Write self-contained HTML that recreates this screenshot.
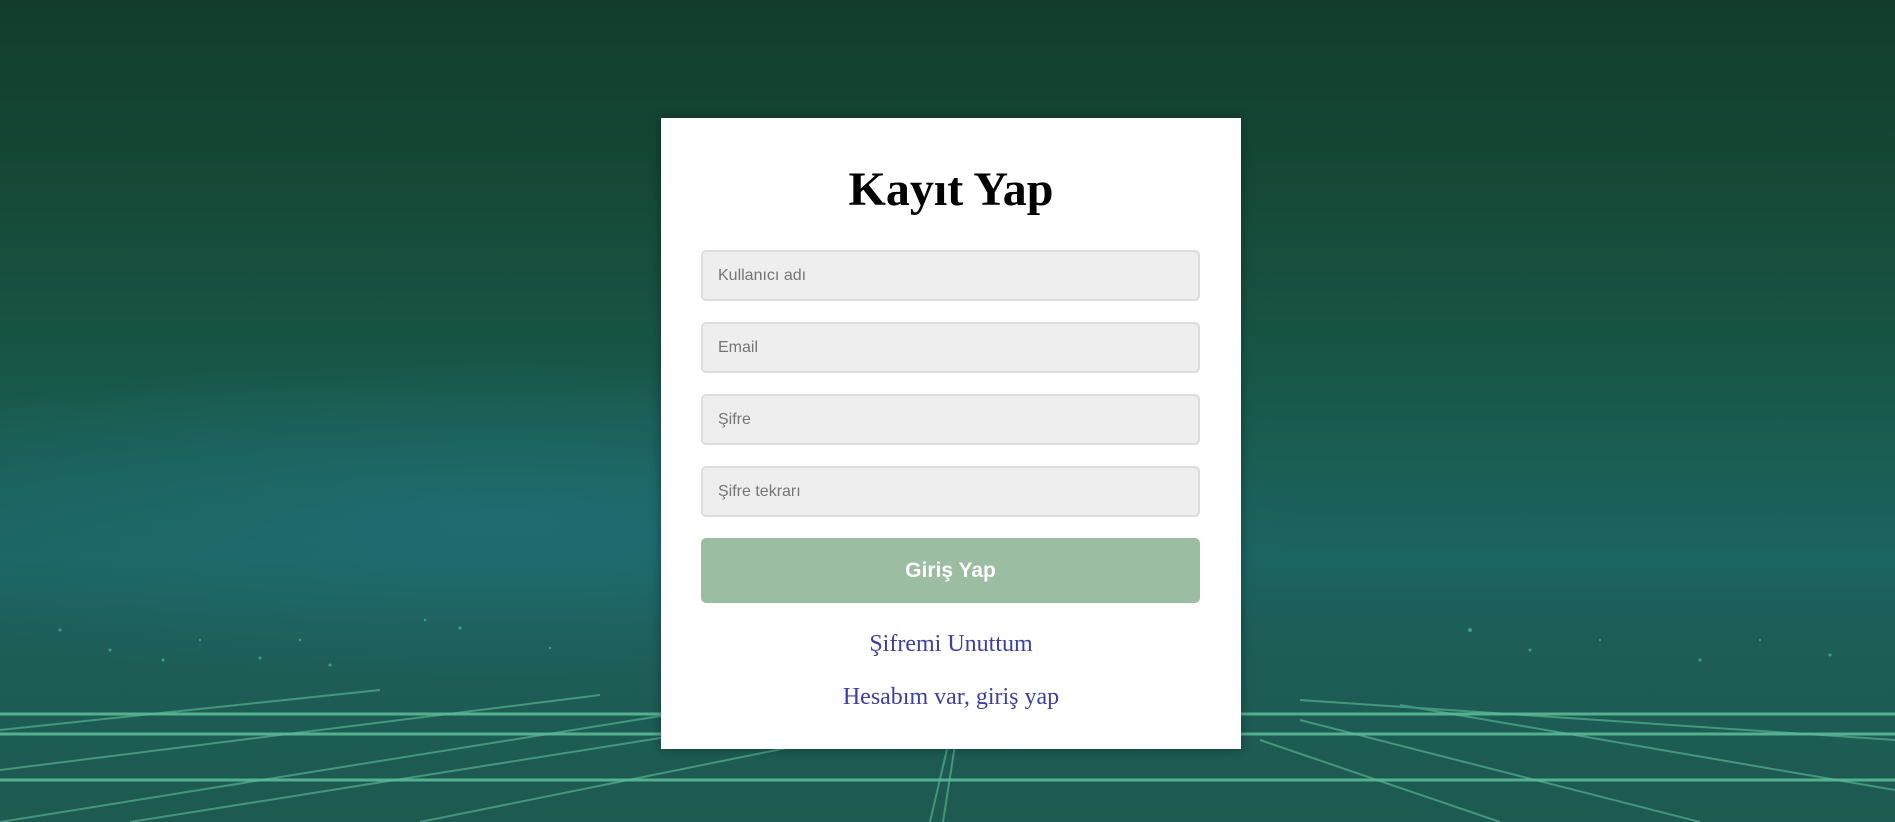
<!DOCTYPE html>
<html><head><meta charset="utf-8"><style>
html,body{margin:0;width:1895px;height:822px;overflow:hidden}
body{position:relative;font-family:"Liberation Sans",sans-serif;
background:
radial-gradient(ellipse 800px 160px at 500px 520px, rgba(32,110,118,0.8), rgba(32,110,118,0) 100%),
linear-gradient(180deg,#123d2c 0%,#164a38 25%,#195a4c 50%,#1c6462 68%,#1d5e58 76%,#1d5a50 100%);}
.bg{position:absolute;left:0;top:0}
.card{position:absolute;left:661px;top:118px;width:580px;height:631px;background:#fff;box-shadow:0 0 10px rgba(0,0,0,.35);box-sizing:border-box}
h1{margin:0;position:absolute;left:0;width:100%;text-align:center;font:bold 48px "Liberation Serif",serif;line-height:1;top:48px}
.in{position:absolute;left:40px;width:499px;height:51px;box-sizing:border-box;background:#eeeeee;border:2px solid #dddddd;border-radius:5px;padding-left:15px;font-size:16px;color:#757575;line-height:47px}
.btn{position:absolute;left:40px;top:420px;width:499px;height:65px;background:#9bbda2;border-radius:5px;color:#fff;font-weight:bold;font-size:21px;text-align:center;line-height:65px}
.lk{position:absolute;left:0;width:100%;text-align:center;font:24px "Liberation Serif",serif;color:#3c40a0}
</style></head><body>
<svg class="bg" width="1895" height="822" viewBox="0 0 1895 822">
<g fill="#4fd0a8" opacity=".6">
<circle cx="60" cy="630" r="1.5"/><circle cx="110" cy="650" r="1.5"/><circle cx="163" cy="660" r="1.5"/><circle cx="200" cy="640" r="1.2"/><circle cx="260" cy="658" r="1.5"/><circle cx="300" cy="640" r="1.2"/><circle cx="330" cy="665" r="1.5"/><circle cx="425" cy="620" r="1.2"/><circle cx="460" cy="628" r="1.5"/><circle cx="550" cy="648" r="1.2"/><circle cx="1470" cy="630" r="2"/><circle cx="1530" cy="650" r="1.5"/><circle cx="1600" cy="640" r="1.2"/><circle cx="1700" cy="660" r="1.5"/><circle cx="1760" cy="640" r="1.2"/><circle cx="1830" cy="655" r="1.5"/>
</g>
<g stroke="#5ebf98" stroke-width="3" opacity=".85">
<line x1="0" y1="714" x2="1895" y2="714"/><line x1="0" y1="734" x2="1895" y2="734"/><line x1="0" y1="780" x2="1895" y2="780"/>
</g>
<g stroke="#5ebf98" stroke-width="2" opacity=".6">
<line x1="0" y1="730" x2="380" y2="690"/><line x1="0" y1="770" x2="600" y2="695"/><line x1="0" y1="822" x2="760" y2="700"/><line x1="130" y1="822" x2="900" y2="700"/><line x1="420" y1="822" x2="1000" y2="705"/>
<line x1="930" y1="822" x2="948" y2="745"/><line x1="943" y1="822" x2="955" y2="745"/>
<line x1="1895" y1="740" x2="1300" y2="700"/><line x1="1895" y1="790" x2="1400" y2="705"/><line x1="1700" y1="822" x2="1300" y2="720"/><line x1="1500" y1="822" x2="1260" y2="740"/>
</g>
</svg>
<div class="card">
<h1>Kayıt Yap</h1>
<div class="in" style="top:132px">Kullanıcı adı</div>
<div class="in" style="top:204px">Email</div>
<div class="in" style="top:276px">Şifre</div>
<div class="in" style="top:348px">Şifre tekrarı</div>
<div class="btn">Giriş Yap</div>
<div class="lk" style="top:513px">Şifremi Unuttum</div>
<div class="lk" style="top:566px">Hesabım var, giriş yap</div>
</div>
</body></html>
